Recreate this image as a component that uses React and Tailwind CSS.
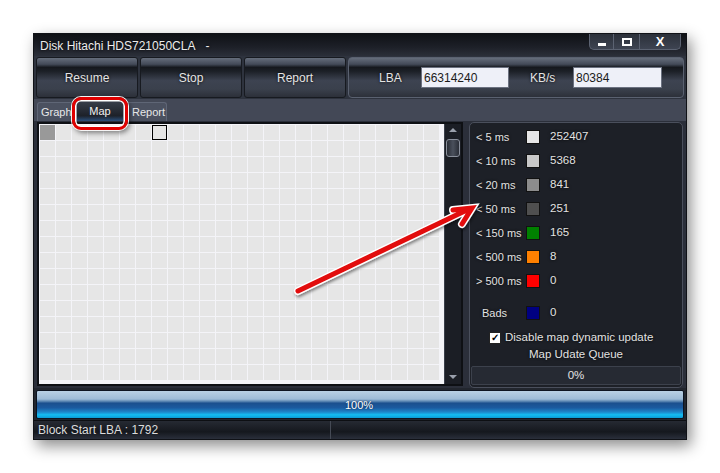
import React from "react";

const BTN_BG =
  "bg-[linear-gradient(to_bottom,#656d7b_0%,#434a58_16%,#15181d_24%,#1c2027_34%,#3d4351_58%,#3a404c_80%,#2c3039_100%)]";

const LEGEND = [
  { label: "< 5 ms", color: "bg-[#e6e6e6]", value: "252407" },
  { label: "< 10 ms", color: "bg-[#c8c8c8]", value: "5368" },
  { label: "< 20 ms", color: "bg-[#8c8c8c]", value: "841" },
  { label: "< 50 ms", color: "bg-[#4f4f4f]", value: "251" },
  { label: "< 150 ms", color: "bg-[#008000]", value: "165" },
  { label: "< 500 ms", color: "bg-[#ff8000]", value: "8" },
  { label: "> 500 ms", color: "bg-[#ff0000]", value: "0" },
];

const CELLS = Array.from({ length: 25 * 16 }, (_, i) => i);

function ToolButton({ children }) {
  return (
    <div
      className={`w-[102px] h-full flex items-center justify-center rounded-[3px] border border-[#171a20] ${BTN_BG} text-[12px] text-[#e4e4e4] [text-shadow:0_0_3px_#000]`}
    >
      {children}
    </div>
  );
}

function LegendRow({ label, color, value, indent }) {
  return (
    <div className="h-[24px] flex items-center whitespace-nowrap">
      <span className={`w-[55px] ${indent ? "pl-[11px]" : "pl-[5px]"} text-[11px] text-[#e2e2e2] [text-shadow:0_0_3px_#000]`}>
        {label}
      </span>
      <span className={`w-[14px] h-[14px] border border-[#111] ${color}`} />
      <span className="ml-[10px] text-[11.5px] text-[#e2e2e2] [text-shadow:0_0_3px_#000]">{value}</span>
    </div>
  );
}

export default function App() {
  return (
    <div className="relative w-[720px] h-[473px] bg-white pl-[33px] pt-[33px] font-['Liberation_Sans',Arial,sans-serif] overflow-hidden">
      <div className="w-[654px] h-[407px] flex flex-col border border-[#101217] bg-[#2e333e] shadow-[4px_6px_14px_rgba(0,0,0,0.45)]">
        {/* title bar */}
        <div className="h-[22px] flex items-start justify-between bg-[linear-gradient(to_bottom,#0f1115,#1d2028_60%,#2b2f39)]">
          <span className="pl-[6px] pt-[3px] text-[12px] text-[#ececec] [text-shadow:0_0_3px_#000]">
            Disk Hitachi HDS721050CLA&nbsp;&nbsp;&nbsp;-
          </span>
          <div className="flex mr-[5px] h-[16px]">
            <div className="w-[25px] flex items-end justify-center pb-[3px] border border-t-0 border-[#5c6372] rounded-bl-[5px] bg-[linear-gradient(to_bottom,#2b3039,#3e4452)]">
              <span className="w-[8px] h-[3px] bg-white" />
            </div>
            <div className="w-[26px] flex items-center justify-center border border-t-0 border-l-0 border-[#5c6372] bg-[linear-gradient(to_bottom,#2b3039,#3e4452)]">
              <span className="w-[10px] h-[8px] border-2 border-white" />
            </div>
            <div className="w-[41px] flex items-center justify-center border border-t-0 border-l-0 border-[#5c6372] rounded-br-[5px] bg-[linear-gradient(to_bottom,#2b3039,#3e4452)]">
              <span className="text-[13px] font-bold text-white leading-none">X</span>
            </div>
          </div>
        </div>

        {/* toolbar */}
        <div className="h-[43px] flex gap-[2px] px-[2px] py-[1px]">
          <ToolButton>Resume</ToolButton>
          <ToolButton>Stop</ToolButton>
          <ToolButton>Report</ToolButton>
          <div className={`flex-1 flex items-center rounded-[4px] border border-[#5a6170] ${BTN_BG} text-[12px] text-[#e4e4e4]`}>
            <span className="ml-[30px] w-[42px] [text-shadow:0_0_3px_#000]">LBA</span>
            <div className="w-[88px] h-[21px] flex items-center pl-[2px] bg-[#eef0f8] border border-[#6b7180] text-[#1a1a1a]">66314240</div>
            <span className="ml-[21px] w-[43px] [text-shadow:0_0_3px_#000]">KB/s</span>
            <div className="w-[89px] h-[21px] flex items-center pl-[2px] bg-[#eef0f8] border border-[#6b7180] text-[#1a1a1a]">80384</div>
          </div>
        </div>

        {/* tabs */}
        <div className="h-[22px] flex items-end pl-[3px] gap-[2px] bg-[#434856]">
          <div className="w-[36px] h-[19px] flex items-center pl-[3px] border border-b-0 border-[#5f6676] rounded-t-[3px] bg-[#4b5160] text-[11px] text-[#e8e8e8] overflow-hidden">
            Graph
          </div>
          <div className="w-[46px] h-[21px] flex items-start justify-center pt-[3px] ml-[2px] rounded-t-[3px] bg-[linear-gradient(to_bottom,#3a404d,#1d2129_75%,#2a4f7c)] text-[11px] text-[#f0f0f0]">
            Map
          </div>
          <div className="w-[42px] h-[19px] flex items-center pl-[6px] border border-b-0 border-[#5f6676] rounded-t-[3px] bg-[#4b5160] text-[11px] text-[#e8e8e8]">
            Report
          </div>
        </div>

        {/* content */}
        <div className="h-[267px] flex bg-[#2b2f3a] pl-[3px] pt-[1px]">
          <div className="w-[426px] h-[264px] flex border-2 border-[#0e1014] bg-[#16181d]">
            <div className="w-[405px] h-[260px] bg-[#f4f4f8] p-px">
              <div className="grid grid-cols-[repeat(25,15px)] grid-rows-[repeat(16,15px)] gap-px">
                {CELLS.map((i) => (
                  <div
                    key={i}
                    className={
                      i === 0
                        ? "bg-[#999999]"
                        : i === 7
                        ? "bg-[#e6e6e6] border border-black"
                        : "bg-[#e6e6e6]"
                    }
                  />
                ))}
              </div>
            </div>
            <div className="flex-1 flex flex-col items-center bg-[#1b1e25] border-l border-[#3a3f4a]">
              <span className="mt-[4px] w-0 h-0 border-l-[4px] border-r-[4px] border-b-[4px] border-l-transparent border-r-transparent border-b-[#9aa0ac]" />
              <span className="mt-[7px] w-[14px] h-[18px] rounded-[3px] border border-[#8a909c] bg-[linear-gradient(to_right,#2a2e37,#4a505c,#2a2e37)]" />
              <span className="mt-auto mb-[5px] w-0 h-0 border-l-[4px] border-r-[4px] border-t-[4px] border-l-transparent border-r-transparent border-t-[#9aa0ac]" />
            </div>
          </div>

          <div className="ml-[6px] w-[214px] h-[266px] flex flex-col rounded-[5px] border border-[#4a4f5c] bg-[#1d2027] pt-[2px] px-[1px]">
            {LEGEND.map((r) => (
              <LegendRow key={r.label} {...r} />
            ))}
            <div className="mt-[8px]">
              <LegendRow label="Bads" color="bg-[#000080]" value="0" indent />
            </div>
            <div className="mt-[5px] h-[16px] flex items-center pl-[18px] text-[11.5px] text-[#e2e2e2] whitespace-nowrap">
              <span className="w-[12px] h-[12px] flex items-center justify-center bg-white border border-[#222] text-[10px] leading-none text-black font-bold">
                ✓
              </span>
              <span className="ml-[4px] [text-shadow:0_0_3px_#000]">Disable map dynamic update</span>
            </div>
            <div className="h-[18px] flex items-center justify-center text-[11.5px] text-[#e2e2e2] [text-shadow:0_0_3px_#000]">
              Map Udate Queue
            </div>
            <div className="mt-[2px] h-[19px] flex items-center justify-center rounded-[2px] border border-[#3c414c] bg-[#262a33] text-[11.5px] text-[#e2e2e2]">
              0%
            </div>
          </div>
        </div>

        {/* progress */}
        <div className="h-[32px] px-[2px] py-[2px] bg-[#22262e]">
          <div className="h-[29px] flex items-center justify-center rounded-[2px] border border-[#0d1420] bg-[linear-gradient(to_bottom,#b9d0e4_0%,#9dbbd6_30%,#5d88b4_38%,#1b4f8e_45%,#1b5a9f_62%,#1e86c9_78%,#14bdf2_88%,#0c9ad4_100%)] text-[11px] text-white [text-shadow:0_0_2px_#0a2a50]">
            <span className="ml-[-2px] mt-[1px]">100%</span>
          </div>
        </div>

        {/* status */}
        <div className="flex-1 flex items-center bg-[linear-gradient(to_bottom,#262a33,#15181e_60%,#2a2f3b)] border-t border-[#0d0f13]">
          <span className="w-[297px] pl-[4px] text-[12px] text-[#dcdcdc] border-r border-[#454a55]">Block Start LBA : 1792</span>
        </div>
      </div>

      {/* red highlight around Map tab */}
      <div className="absolute left-[72px] top-[97px] w-[56px] h-[33px] rounded-[9px] border-[3px] border-[#e00000] shadow-[0_0_0_1px_#f4f4f4,inset_0_0_0_1.5px_#ffffff,2px_3px_5px_rgba(0,0,0,0.45)]" />

      {/* red arrow */}
      <svg className="absolute left-0 top-0" width="720" height="473" viewBox="0 0 720 473">
        <defs>
          <filter id="sh" x="-10%" y="-10%" width="130%" height="130%">
            <feDropShadow dx="1" dy="2" stdDeviation="1.5" floodColor="#000" floodOpacity="0.45" />
          </filter>
        </defs>
        <g filter="url(#sh)" fill="none" strokeLinecap="round" strokeLinejoin="miter">
          <path d="M298 291 L469 209 M453 210 L472 208 L462 224" stroke="#ffffff" strokeWidth="8" />
          <path d="M298 291 L469 209 M453 210 L472 208 L462 224" stroke="#e20a0a" strokeWidth="5" />
        </g>
      </svg>
    </div>
  );
}
